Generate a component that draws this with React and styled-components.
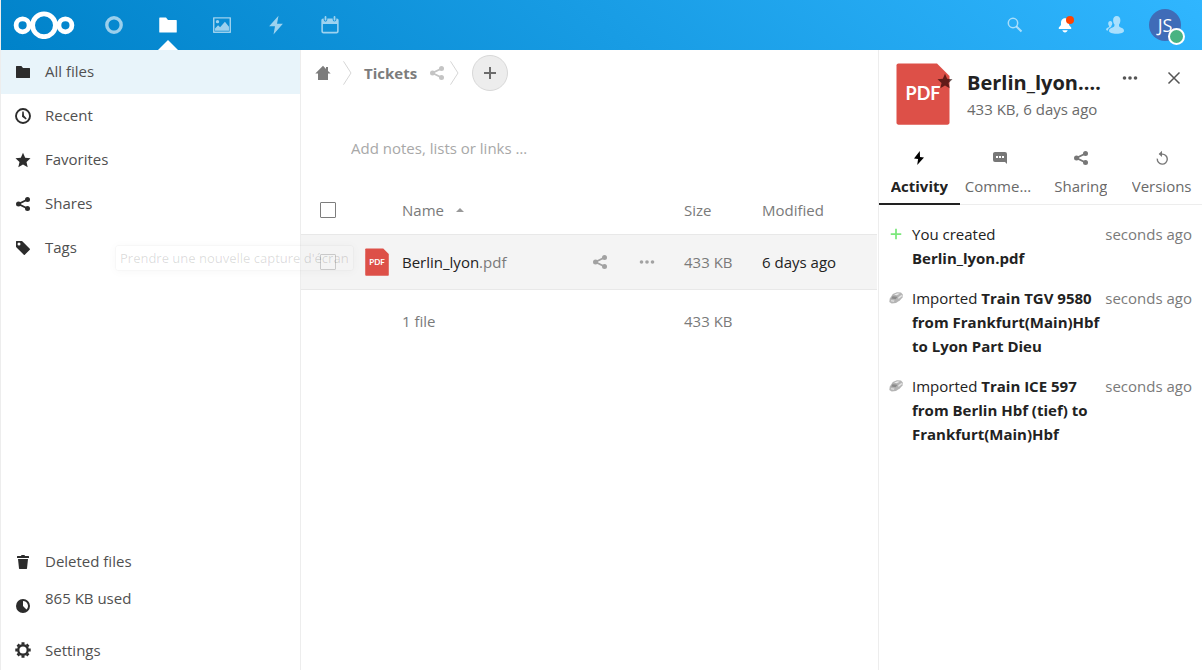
import React from "react";
import styled, { createGlobalStyle, css } from "styled-components";

const GlobalStyle = createGlobalStyle`
  *, *::before, *::after { box-sizing: border-box; }
  body {
    margin: 0;
    background: #fff;
    color: #222;
    font-family: "Open Sans", "Noto Sans", sans-serif;
    font-size: 15px;
    line-height: 24px;
  }
  button, input { font: inherit; color: inherit; }
  a { color: inherit; text-decoration: none; }
  svg { display: block; flex: none; }
  ul { list-style: none; margin: 0; padding: 0; }
`;

/* ---------- icons ---------- */

const Icon = ({ size = 16, children, ...rest }) => (
  <svg width={size} height={size} viewBox="0 0 16 16" fill="currentColor" aria-hidden="true" {...rest}>
    {children}
  </svg>
);

const FolderIcon = (p) => (
  <Icon {...p}>
    <path d="M1.5 2a.5.5 0 0 0-.5.5v11c0 .3.2.5.5.5h13a.5.5 0 0 0 .5-.5V4.400a.5.5 0 0 0-.5-.5H8L6.400 2z" />
  </Icon>
);
const ClockIcon = () => (
  <Icon>
    <circle cx="8" cy="8" r="7" fill="none" stroke="currentColor" strokeWidth="1.900" />
    <path d="M7.300 3.500h1.400l.3 4.100 2.700 2.900-.9.900L7 8.800z" />
  </Icon>
);
const StarIcon = (p) => (
  <Icon {...p}>
    <path d="M8 .8l2.200 5 5.300.5-4 3.600 1.200 5.300L8 12.400l-4.700 2.800 1.200-5.300-4-3.600 5.300-.5z" />
  </Icon>
);
const ShareIcon = (p) => (
  <Icon {...p}>
    <circle cx="12.500" cy="3.500" r="2.500" />
    <circle cx="3.500" cy="8" r="2.500" />
    <circle cx="12.500" cy="12.500" r="2.500" />
    <path d="M12.500 3.500L3.500 8l9 4.500" fill="none" stroke="currentColor" strokeWidth="1.900" />
  </Icon>
);
const TagIcon = () => (
  <Icon>
    <path
      fillRule="evenodd"
      d="M1.500 1h5.200l.6.300 7.500 7.400c.3.300.3.700 0 1l-5 5c-.3.300-.7.300-1 0L1.300 7.300 1 6.700V1.500c0-.3.200-.5.500-.5zM4 2.500a1.500 1.500 0 1 0 0 3 1.500 1.500 0 0 0 0-3z"
    />
  </Icon>
);
const TrashIcon = () => (
  <Icon>
    <path d="M6.500 1L6 2H2.500c-.3 0-.5.300-.5.500V4h12V2.500c0-.2-.2-.5-.5-.5H10l-.5-1zM3 5l1 9.500c0 .3.200.5.500.5h7c.3 0 .5-.2.500-.5L13 5z" />
  </Icon>
);
const QuotaIcon = () => (
  <Icon>
    <path
      fillRule="evenodd"
      d="M8 1a7 7 0 1 0 0 14A7 7 0 0 0 8 1zm0 2a5 5 0 0 1 3.500 8.500L8 8z"
    />
  </Icon>
);
const GearIcon = () => (
  <Icon>
    <circle cx="8" cy="8" r="4.800" fill="none" stroke="currentColor" strokeWidth="2.400" />
    <g stroke="currentColor" strokeWidth="3">
      <path d="M8 .3v2.200M8 13.500v2.200M.3 8h2.200M13.500 8h2.200" />
      <path d="M2.600 2.600l1.500 1.500M11.900 11.900l1.500 1.500M2.600 13.400l1.500-1.500M11.900 4.100l1.500-1.500" />
    </g>
  </Icon>
);
const HomeIcon = () => (
  <Icon>
    <path d="M8 .8L.3 8.600H3V15h10V8.600h2.700L13 5.900V2h-2v1.900z" />
  </Icon>
);
const BoltIcon = (p) => (
  <Icon {...p}>
    <path d="M10 .5L2.500 9h4.700L6 15.500 13.500 7H8.800z" />
  </Icon>
);
const SmallBoltIcon = () => (
  <Icon>
    <path d="M8.800 1L3 8.400l4.100.7L6.200 15 13 7.600l-4-.6z" />
  </Icon>
);
const PictureIcon = (p) => (
  <Icon {...p}>
    <path
      fillRule="evenodd"
      d="M.5 1h15c.3 0 .5.200.5.500v13c0 .3-.2.500-.5.500H.5a.5.500 0 0 1-.5-.5v-13C0 1.200.2 1 .5 1zM1.300 2.300v11.400h13.400V2.300zM1.800 13.200V11l2.700-2.800 1.800 1.700L10.600 5l3.600 4.600v3.600z"
    />
    <circle cx="4" cy="5" r="1.500" />
  </Icon>
);
const CircleIcon = (p) => (
  <Icon {...p}>
    <circle cx="8" cy="8" r="6.400" fill="none" stroke="currentColor" strokeWidth="3" />
  </Icon>
);
const CalendarIcon = (p) => (
  <Icon {...p}>
    <path
      fillRule="evenodd"
      d="M2 2.200h.4v1.200a1.600 1.600 0 0 0 3.200 0V2.200h4.800v1.200a1.600 1.600 0 0 0 3.200 0V2.200h.4c1.100 0 1.700.7 1.700 1.800v9.600c0 1.200-.7 1.900-1.900 1.900H2.200C1 15.500.3 14.800.3 13.600V4c0-1.100.6-1.800 1.700-1.800zM1.700 7v6.300c0 .5.300.8.800.8h11c.5 0 .8-.3.800-.8V7z"
    />
    <path d="M3.200.9c0-1.100 1.600-1.100 1.600 0v2.500c0 1.100-1.600 1.100-1.600 0zM11.200.9c0-1.100 1.600-1.100 1.600 0v2.500c0 1.100-1.600 1.100-1.600 0z" />
  </Icon>
);
const SearchIcon = () => (
  <Icon>
    <circle cx="6" cy="6" r="4.700" fill="none" stroke="currentColor" strokeWidth="1.500" />
    <path d="M9.500 9.500l5 5" stroke="currentColor" strokeWidth="2" />
  </Icon>
);
const BellIcon = () => (
  <Icon>
    <path d="M8 1.300C5 1.300 4 3.800 4 6v2L1.800 10.500V12h12.400v-1.500L12 8V6c0-2.200-1-4.700-4-4.700zM5.300 13.300c.4 1.200 1.300 2.200 2.700 2.200s2.300-1 2.700-2.200z" />
  </Icon>
);
const ContactsIcon = () => (
  <svg width="18" height="18" viewBox="0 0 18 18" fill="currentColor" aria-hidden="true">
    <path d="M10.700.1c-2.300 0-3.600 1.700-3.600 4.100 0 1.900.6 3.300 1.400 4.300 0 1.900-.3 2.400-2.100 3C4.600 12.100 3 13 3 14.800c0 2.100 3.100 3 7.600 3s7.400-1 7.400-3c0-2-1.700-2.700-3.300-3.300-1.500-.6-1.800-1.200-1.700-3 .8-1 1.400-2.400 1.400-4.300C14.400 1.800 13 .1 10.700.1z" />
    <path d="M4.300 4.900c-1.400 0-2.100 1-2.100 2.500 0 1.100.3 1.900.9 2.500 0 1-.2 1.300-1 1.600-1 .4-2 .9-2 2 0 .6.600 1 1.600 1.200.4-2 1.700-3 3.600-3.700-.2-.3-.2-.7-.1-1.100.6-.6 1.100-1.400 1.100-2.500C6.300 5.900 5.700 4.900 4.300 4.900z" />
  </svg>
);
const DotsIcon = () => (
  <Icon>
    <circle cx="2.500" cy="8" r="1.800" />
    <circle cx="8" cy="8" r="1.800" />
    <circle cx="13.500" cy="8" r="1.800" />
  </Icon>
);
const CloseIcon = () => (
  <Icon fill="none" stroke="currentColor" strokeWidth="1.500">
    <path d="M2.500 2.500l11 11M13.500 2.500l-11 11" />
  </Icon>
);
const CommentIcon = () => (
  <Icon>
    <path
      fillRule="evenodd"
      d="M3 2h10a2 2 0 0 1 2 2v10l-2-2H3a2 2 0 0 1-2-2V4c0-1.100.9-2 2-2zM4 6v2h2V6zm3 0v2h2V6zm3 0v2h2V6z"
    />
  </Icon>
);
const VersionsIcon = () => (
  <Icon fill="none" stroke="currentColor" strokeWidth="1.400">
    <path d="M3.300 8.600A5 5 0 1 0 8 4.100H5.500" />
    <path d="M8 .8L4.700 4.100 8 7z" fill="currentColor" stroke="none" />
  </Icon>
);
const PlusIcon = ({ size = 16, strokeWidth = 2 }) => (
  <Icon size={size} fill="none" stroke="currentColor" strokeWidth={strokeWidth}>
    <path d="M8 2v12M2 8h12" />
  </Icon>
);
const TrainIcon = () => (
  <svg width="14" height="14" viewBox="0 0 14 14" aria-hidden="true">
    <path d="M.7 7.800L3.800 3 8 1.200l4 .3 1.800 2-.3 3-2.500 2.800-4 2.800-4.300.4L.3 11z" fill="#b4b4b4" />
    <path d="M5 3.600l3.500-1.400 2.300.5-3.300 1.600z" fill="#ececec" />
    <path d="M3.500 5.200l5 .5-1.800 2.500-4.500-.6z" fill="#8a8a8a" />
    <path d="M9.200 6.300l3.500-2.500.3 1.400-3.500 2.700zM2.200 9.200l3.300.4-.6 1.100-3-.4z" fill="#e6e6e6" />
  </svg>
);
const ChevronIcon = () => (
  <svg width="9" height="24" viewBox="0 0 9 24" fill="none" stroke="#d6d6d6" aria-hidden="true">
    <path d="M.5.300L8 12 .5 23.700" />
  </svg>
);
const SortIcon = () => (
  <svg width="8" height="4" viewBox="0 0 8 4" fill="#999" aria-hidden="true">
    <path d="M4 0l4 4H0z" />
  </svg>
);
const Logo = () => (
  <svg width="62" height="28" viewBox="0 0 62 28" fill="none" stroke="#fff" role="img" aria-label="Nextcloud">
    <circle cx="31" cy="14.300" r="11.400" strokeWidth="4.800" />
    <circle cx="9.600" cy="14.300" r="6.500" strokeWidth="4.800" />
    <circle cx="52.400" cy="14.300" r="6.500" strokeWidth="4.800" />
  </svg>
);
const PdfIcon = ({ width, height }) => (
  <svg width={width} height={height} viewBox="0 0 54 62" aria-hidden="true">
    <path d="M2.500.5H41L53.500 13v46.500c0 1.300-.9 2.200-2.200 2.200H2.500C1.300 61.700.5 60.800.5 59.500v-57C.5 1.300 1.300.5 2.500.5z" fill="#dd5048" />
    <text x="27" y="37" textAnchor="middle" fill="#fff" fontFamily="Lato, sans-serif" fontWeight="700" fontSize="18">
      PDF
    </text>
  </svg>
);

/* ---------- layout ---------- */

const Page = styled.div`
  min-height: 100vh;
  display: flex;
  flex-direction: column;
  border-left: 1px solid #ededed;
`;

const Header = styled.header`
  display: flex;
  align-items: center;
  justify-content: space-between;
  height: 50px;
  padding: 0 12px;
  background: linear-gradient(40deg, #0082c9 0%, #30b6ff 100%);
  color: #fff;
`;

const HeaderGroup = styled.nav`
  display: flex;
  align-items: center;
`;

const LogoLink = styled.a`
  margin-right: 12px;
`;

const AppLink = styled.a`
  position: relative;
  display: flex;
  align-items: center;
  justify-content: center;
  width: 54px;
  height: 50px;
  color: ${(p) => (p.$active ? "#fff" : "rgba(255, 255, 255, 0.6)")};
  ${(p) =>
    p.$active &&
    css`
      &::after {
        content: "";
        position: absolute;
        bottom: 0;
        left: 17px;
        border: 10px solid transparent;
        border-top-width: 0;
        border-bottom-color: #fff;
      }
    `}
`;

const HeaderButton = styled.button`
  display: flex;
  align-items: center;
  justify-content: center;
  width: 50px;
  height: 50px;
  padding: 0;
  border: 0;
  background: none;
  color: ${(p) => (p.$bright ? "#fff" : "rgba(255, 255, 255, 0.6)")};
`;

const Badged = styled.span`
  position: relative;
`;

const NotificationDot = styled.span`
  position: absolute;
  top: -1px;
  right: -1px;
  width: 8px;
  height: 8px;
  border-radius: 50%;
  background: #ff4402;
`;

const Avatar = styled.span`
  display: block;
  width: 32px;
  height: 32px;
  border-radius: 50%;
  background: #3f6cb8;
  color: #fff;
  font-size: 18px;
  line-height: 32px;
  text-align: center;
`;

const StatusDot = styled.span`
  position: absolute;
  right: -4px;
  bottom: -4px;
  width: 17px;
  height: 17px;
  border: 2px solid #fff;
  border-radius: 50%;
  background: #49b382;
`;

const Body = styled.div`
  position: relative;
  flex: 1;
  display: flex;
`;

const Sidebar = styled.nav`
  display: flex;
  flex-direction: column;
  justify-content: space-between;
  flex: none;
  width: 300px;
  border-right: 1px solid #ededed;
`;

const NavLink = styled.a`
  display: flex;
  align-items: center;
  gap: 14px;
  height: ${(p) => (p.$short ? 40 : 44)}px;
  padding-left: 14px;
  background: ${(p) => (p.$active ? "#e8f4fa" : "transparent")};
  color: #505050;
  svg { color: #2c2c2c; }
`;

const NavLabel = styled.span`
  padding-bottom: 2px;
`;

const Quota = styled.a`
  display: flex;
  gap: 14px;
  height: 46px;
  padding-left: 14px;
  color: #505050;
  line-height: 28px;
  svg { margin-top: 14px; color: #2c2c2c; }
`;

const Main = styled.main`
  flex: 1;
  min-width: 0;
  padding-right: 1px;
`;

const Breadcrumbs = styled.nav`
  display: flex;
  align-items: center;
  gap: 12px;
  height: 45px;
  padding-left: 14px;
  color: #7c7c7c;
`;

const CrumbLink = styled.a`
  font-weight: 700;
`;

const CrumbEnd = styled.span`
  display: flex;
  align-items: center;
  gap: 5px;
  color: #c4c4c4;
`;

const AddButton = styled.button`
  display: flex;
  align-items: center;
  justify-content: center;
  width: 36px;
  height: 36px;
  margin-left: 1px;
  padding: 0;
  border: 1px solid #d8d8d8;
  border-radius: 50%;
  background: #ededed;
  color: #6c6c6c;
`;

const Notes = styled.input`
  display: block;
  width: 100%;
  margin-top: 37px;
  padding: 0 50px;
  height: 32px;
  border: 0;
  background: none;
  &::placeholder { color: #a8a8a8; opacity: 1; }
`;

const FileTable = styled.table`
  width: 100%;
  margin-top: 22px;
  border-collapse: collapse;
  table-layout: fixed;
  color: #7a7a7a;
  th, td { padding: 0; text-align: left; font-weight: 400; }
  thead tr { height: 48px; }
  tfoot tr { height: 64px; }
`;

const Column = styled.col`
  width: ${(p) => (p.$width ? `${p.$width}px` : "auto")};
`;

const FileRow = styled.tr`
  height: 55px;
  border-top: 1px solid #e8e8e8;
  border-bottom: 1px solid #e8e8e8;
  background: #f4f4f4;
`;

const Checkbox = styled.input`
  appearance: none;
  display: block;
  width: 16px;
  height: 16px;
  margin: 0 0 0 19px;
  border: 1px solid ${(p) => (p.$faded ? "#c9c9c9" : "#7d7d7d")};
  border-radius: 1px;
`;

const SortButton = styled.button`
  display: flex;
  align-items: center;
  gap: 12px;
  padding: 0;
  border: 0;
  background: none;
`;

const NameCell = styled.div`
  display: flex;
  align-items: center;
  gap: 3px;
  padding-right: 15px;
`;

const FileName = styled.a`
  flex: 1;
  color: #7a7a7a;
  span { color: #222; }
`;

const IconButton = styled.button`
  display: flex;
  align-items: center;
  justify-content: center;
  width: 44px;
  height: 44px;
  padding: 0;
  border: 0;
  background: none;
  color: ${(p) => (p.$light ? "#a2a2a2" : "#555")};
`;

const ModifiedCell = styled.td`
  color: #222;
`;

const Details = styled.aside`
  flex: none;
  width: 324px;
  border-left: 1px solid #ededed;
`;

const DetailsHeader = styled.div`
  display: flex;
  align-items: flex-start;
  height: 91px;
  padding: 6px 6px 0 17px;
`;

const Preview = styled.div`
  position: relative;
  padding-top: 7px;
`;

const FavoriteMark = styled.span`
  position: absolute;
  top: 17px;
  right: -3px;
  color: rgba(34, 0, 0, 0.66);
`;

const FileInfo = styled.div`
  flex: 1;
  min-width: 0;
  padding-top: 13px;
  margin-left: 17px;
`;

const FileTitle = styled.h2`
  margin: 0;
  overflow: hidden;
  font-size: 20px;
  line-height: 28px;
  font-weight: 700;
  text-overflow: ellipsis;
  white-space: nowrap;
`;

const FileMeta = styled.p`
  margin: 0;
  color: #6a6a6a;
  white-space: nowrap;
`;

const Tabs = styled.div`
  display: flex;
  height: 64px;
  border-bottom: 1px solid #ededed;
`;

const Tab = styled.button`
  flex: 1;
  min-width: 0;
  display: flex;
  flex-direction: column;
  align-items: center;
  gap: 8px;
  height: 64px;
  padding: 9px 5px 0;
  border: 0;
  border-bottom: 2px solid ${(p) => (p.$active ? "#222" : "transparent")};
  background: none;
  color: ${(p) => (p.$active ? "#222" : "#6a6a6a")};
  font-weight: ${(p) => (p.$active ? 700 : 400)};
  svg { color: ${(p) => (p.$active ? "#000" : "#777")}; }
`;

const TabLabel = styled.span`
  max-width: 100%;
  overflow: hidden;
  text-overflow: ellipsis;
  white-space: nowrap;
`;

const ActivityList = styled.ul`
  display: flex;
  flex-direction: column;
  gap: 16px;
  margin: 17px 10px;
`;

const ActivityItem = styled.li`
  display: flex;
  align-items: flex-start;
`;

const ActivityIcon = styled.span`
  flex: none;
  display: flex;
  align-items: center;
  width: 23px;
  height: 24px;
  color: #7be87b;
`;

const ActivityText = styled.span`
  flex: 1;
  padding-right: 4px;
`;

const ActivityTime = styled.time`
  color: #7a7a7a;
  white-space: nowrap;
`;

const Tooltip = styled.div`
  position: absolute;
  top: 195px;
  left: 114px;
  padding: 0 4px;
  border: 1px solid rgba(0, 0, 0, 0.03);
  border-radius: 3px;
  box-shadow: 0 1px 10px rgba(0, 0, 0, 0.03);
  color: rgba(0, 0, 0, 0.15);
  font-size: 13px;
  pointer-events: none;
`;

const apps = [
  { name: "Dashboard", icon: <CircleIcon size={18} /> },
  { name: "Files", icon: <FolderIcon size={20} />, active: true },
  { name: "Photos", icon: <PictureIcon size={18} /> },
  { name: "Activity", icon: <BoltIcon size={20} /> },
  { name: "Calendar", icon: <CalendarIcon size={18} /> },
];

const views = [
  { name: "All files", icon: <FolderIcon />, active: true },
  { name: "Recent", icon: <ClockIcon /> },
  { name: "Favorites", icon: <StarIcon /> },
  { name: "Shares", icon: <ShareIcon /> },
  { name: "Tags", icon: <TagIcon /> },
];

const tabs = [
  { name: "Activity", icon: <SmallBoltIcon />, active: true },
  { name: "Comments", icon: <CommentIcon /> },
  { name: "Sharing", icon: <ShareIcon /> },
  { name: "Versions", icon: <VersionsIcon /> },
];

const activities = [
  { verb: "You created", subject: "Berlin_lyon.pdf", icon: <PlusIcon size={14} /> },
  { verb: "Imported", subject: "Train TGV 9580 from Frankfurt(Main)Hbf to Lyon Part Dieu", icon: <TrainIcon /> },
  { verb: "Imported", subject: "Train ICE 597 from Berlin Hbf (tief) to Frankfurt(Main)Hbf", icon: <TrainIcon /> },
];

export default function App() {
  return (
    <Page>
      <GlobalStyle />
      <Header>
        <HeaderGroup aria-label="Apps">
          <LogoLink href="#home"><Logo /></LogoLink>
          {apps.map((app) => (
            <AppLink key={app.name} href="#app" aria-label={app.name} $active={app.active}>
              {app.icon}
            </AppLink>
          ))}
        </HeaderGroup>
        <HeaderGroup aria-label="Account">
          <HeaderButton aria-label="Search"><SearchIcon /></HeaderButton>
          <HeaderButton aria-label="Notifications" $bright>
            <Badged><BellIcon /><NotificationDot /></Badged>
          </HeaderButton>
          <HeaderButton aria-label="Contacts"><ContactsIcon /></HeaderButton>
          <HeaderButton aria-label="Account menu" $bright>
            <Badged><Avatar>JS</Avatar><StatusDot /></Badged>
          </HeaderButton>
        </HeaderGroup>
      </Header>

      <Body>
        <Sidebar aria-label="Files">
          <ul>
            {views.map((view) => (
              <li key={view.name}>
                <NavLink href="#view" $active={view.active}>
                  {view.icon}
                  <NavLabel>{view.name}</NavLabel>
                </NavLink>
              </li>
            ))}
          </ul>
          <ul>
            <li><NavLink href="#deleted"><TrashIcon /><NavLabel>Deleted files</NavLabel></NavLink></li>
            <li><Quota href="#quota"><QuotaIcon />865 KB used</Quota></li>
            <li><NavLink href="#settings" $short><GearIcon />Settings</NavLink></li>
          </ul>
        </Sidebar>

        <Main>
          <Breadcrumbs aria-label="Breadcrumbs">
            <a href="#root" aria-label="Home"><HomeIcon /></a>
            <ChevronIcon />
            <CrumbLink href="#tickets">Tickets</CrumbLink>
            <CrumbEnd><ShareIcon /><ChevronIcon /></CrumbEnd>
            <AddButton aria-label="New"><PlusIcon /></AddButton>
          </Breadcrumbs>
          <Notes aria-label="Notes" placeholder="Add notes, lists or links …" />
          <FileTable>
            <colgroup>
              <Column $width={64} />
              <Column $width={37} />
              <Column />
              <Column $width={78} />
              <Column $width={115} />
            </colgroup>
            <thead>
              <tr>
                <th><Checkbox type="checkbox" aria-label="Select all" /></th>
                <th />
                <th><SortButton>Name<SortIcon /></SortButton></th>
                <th>Size</th>
                <th>Modified</th>
              </tr>
            </thead>
            <tbody>
              <FileRow>
                <td><Checkbox type="checkbox" aria-label="Select Berlin_lyon.pdf" $faded /></td>
                <td><PdfIcon width={24} height={28} /></td>
                <td>
                  <NameCell>
                    <FileName href="#file"><span>Berlin_lyon</span>.pdf</FileName>
                    <IconButton aria-label="Share" $light><ShareIcon /></IconButton>
                    <IconButton aria-label="More actions" $light><DotsIcon /></IconButton>
                  </NameCell>
                </td>
                <td>433 KB</td>
                <ModifiedCell>6 days ago</ModifiedCell>
              </FileRow>
            </tbody>
            <tfoot>
              <tr>
                <td />
                <td />
                <td>1 file</td>
                <td>433 KB</td>
                <td />
              </tr>
            </tfoot>
          </FileTable>
        </Main>

        <Details>
          <DetailsHeader>
            <Preview>
              <PdfIcon width={54} height={62} />
              <FavoriteMark><StarIcon /></FavoriteMark>
            </Preview>
            <FileInfo>
              <FileTitle>Berlin_lyon.pdf</FileTitle>
              <FileMeta>433 KB, 6 days ago</FileMeta>
            </FileInfo>
            <IconButton aria-label="Actions"><DotsIcon /></IconButton>
            <IconButton aria-label="Close"><CloseIcon /></IconButton>
          </DetailsHeader>
          <Tabs role="tablist">
            {tabs.map((tab) => (
              <Tab key={tab.name} role="tab" aria-selected={!!tab.active} $active={tab.active}>
                {tab.icon}
                <TabLabel>{tab.name}</TabLabel>
              </Tab>
            ))}
          </Tabs>
          <ActivityList>
            {activities.map((item) => (
              <ActivityItem key={item.subject}>
                <ActivityIcon>{item.icon}</ActivityIcon>
                <ActivityText>{item.verb} <strong>{item.subject}</strong></ActivityText>
                <ActivityTime>seconds ago</ActivityTime>
              </ActivityItem>
            ))}
          </ActivityList>
        </Details>
        <Tooltip role="tooltip">Prendre une nouvelle capture d'écran</Tooltip>
      </Body>
    </Page>
  );
}
